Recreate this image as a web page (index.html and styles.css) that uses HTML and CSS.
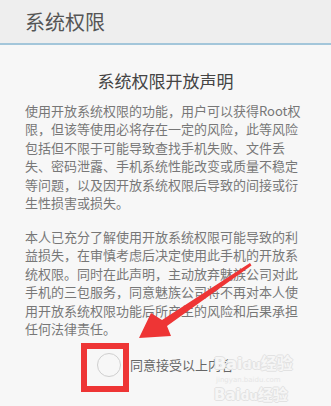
FILE: index.html
```html
<!DOCTYPE html>
<html lang="zh-CN">
<head>
<meta charset="utf-8">
<title>系统权限</title>
<link rel="stylesheet" href="styles.css">
</head>
<body>
<div class="page">
  <header class="topbar"><span class="topbar-title">系统权限</span></header>
  <main class="content">
    <h1 class="heading">系统权限开放声明</h1>
    <p class="para">使用开放系统权限的功能，用户可以获得Root权限，但该等使用必将存在一定的风险，此等风险包括但不限于可能导致查找手机失败、文件丢失、密码泄露、手机系统性能改变或质量不稳定等问题，以及因开放系统权限后导致的间接或衍生性损害或损失。</p>
    <p class="para">本人已充分了解使用开放系统权限可能导致的利益损失，在审慎考虑后决定使用此手机的开放系统权限。同时在此声明，主动放弃魅族公司对此手机的三包服务，同意魅族公司将不再对本人使用开放系统权限功能后所产生的风险和后果承担任何法律责任。</p>
    <div class="agree">
      <span class="radio"></span>
      <span class="agree-label">同意接受以上内容</span>
    </div>
  </main>
  <div class="watermark wm1">Bai<span class="wm-du">du</span>经验</div>
  <div class="watermark wm2">jingyan.baidu.com</div>
  <div class="watermark wm3">Bai<span class="wm-du">du</span>经验</div>
  <div class="redbox"></div>
  <svg class="arrow" width="331" height="406" viewBox="0 0 331 406">
    <polygon fill="#ee3535" points="250,263 251.5,265.5 167,326 171,336 139,338 151,313 162,320"/>
  </svg>
</div>
</body>
</html>
```
FILE: styles.css
```css
html, body {
  margin: 0;
  padding: 0;
}
body {
  background: #f7f7f7;
  font-family: "Noto Sans CJK SC", "Noto Sans", sans-serif;
}
.page {
  position: relative;
  width: 331px;
  height: 406px;
  overflow: hidden;
  background: #f7f7f7;
}
.topbar {
  height: 43px;
  background: #eeeeee;
  border-bottom: 2px solid #a3c6da;
  display: flex;
  align-items: center;
  padding-left: 25px;
  box-sizing: content-box;
}
.topbar-title {
  font-size: 20px;
  color: #555555;
  line-height: 1;
}
.content {
  padding: 0 25px;
}
.heading {
  margin: 24px 0 0;
  font-size: 17px;
  font-weight: normal;
  color: #444444;
  text-align: center;
  line-height: 24px;
}
.para {
  margin: 9px 0 0;
  font-size: 13px;
  line-height: 18.4px;
  color: #777777;
}
.para + .para {
  margin-top: 15.6px;
}
.agree {
  margin-top: 15px;
  display: flex;
  align-items: center;
  justify-content: center;
  gap: 9px;
}
.radio {
  width: 22px;
  height: 22px;
  border: 1px solid #cfcfcf;
  border-radius: 50%;
  background: #f7f7f7;
}
.agree-label {
  font-size: 13px;
  color: #666666;
  line-height: 24px;
}
.watermark {
  position: absolute;
  color: #f6f6f6;
  font-family: "DejaVu Sans", "Noto Sans CJK SC", sans-serif;
  font-weight: bold;
  white-space: nowrap;
  line-height: 1;
  text-shadow: 1px 0 0 #e2e2e2, -1px 0 0 #e2e2e2, 0 1px 0 #e2e2e2, 0 -1px 0 #e2e2e2;
}
.wm-du {
  font-size: 0.8em;
}
.wm1 {
  left: 214px;
  top: 356px;
  font-size: 16px;
}
.wm2 {
  left: 216px;
  top: 377px;
  font-size: 7px;
  font-weight: normal;
  color: #e6e6e6;
  text-shadow: none;
}
.wm3 {
  left: 214px;
  top: 388px;
  font-size: 15px;
}
.redbox {
  position: absolute;
  left: 81px;
  top: 343px;
  width: 36px;
  height: 37px;
  border: 6px solid #ee3535;
}
.arrow {
  position: absolute;
  left: 0;
  top: 0;
}
```
